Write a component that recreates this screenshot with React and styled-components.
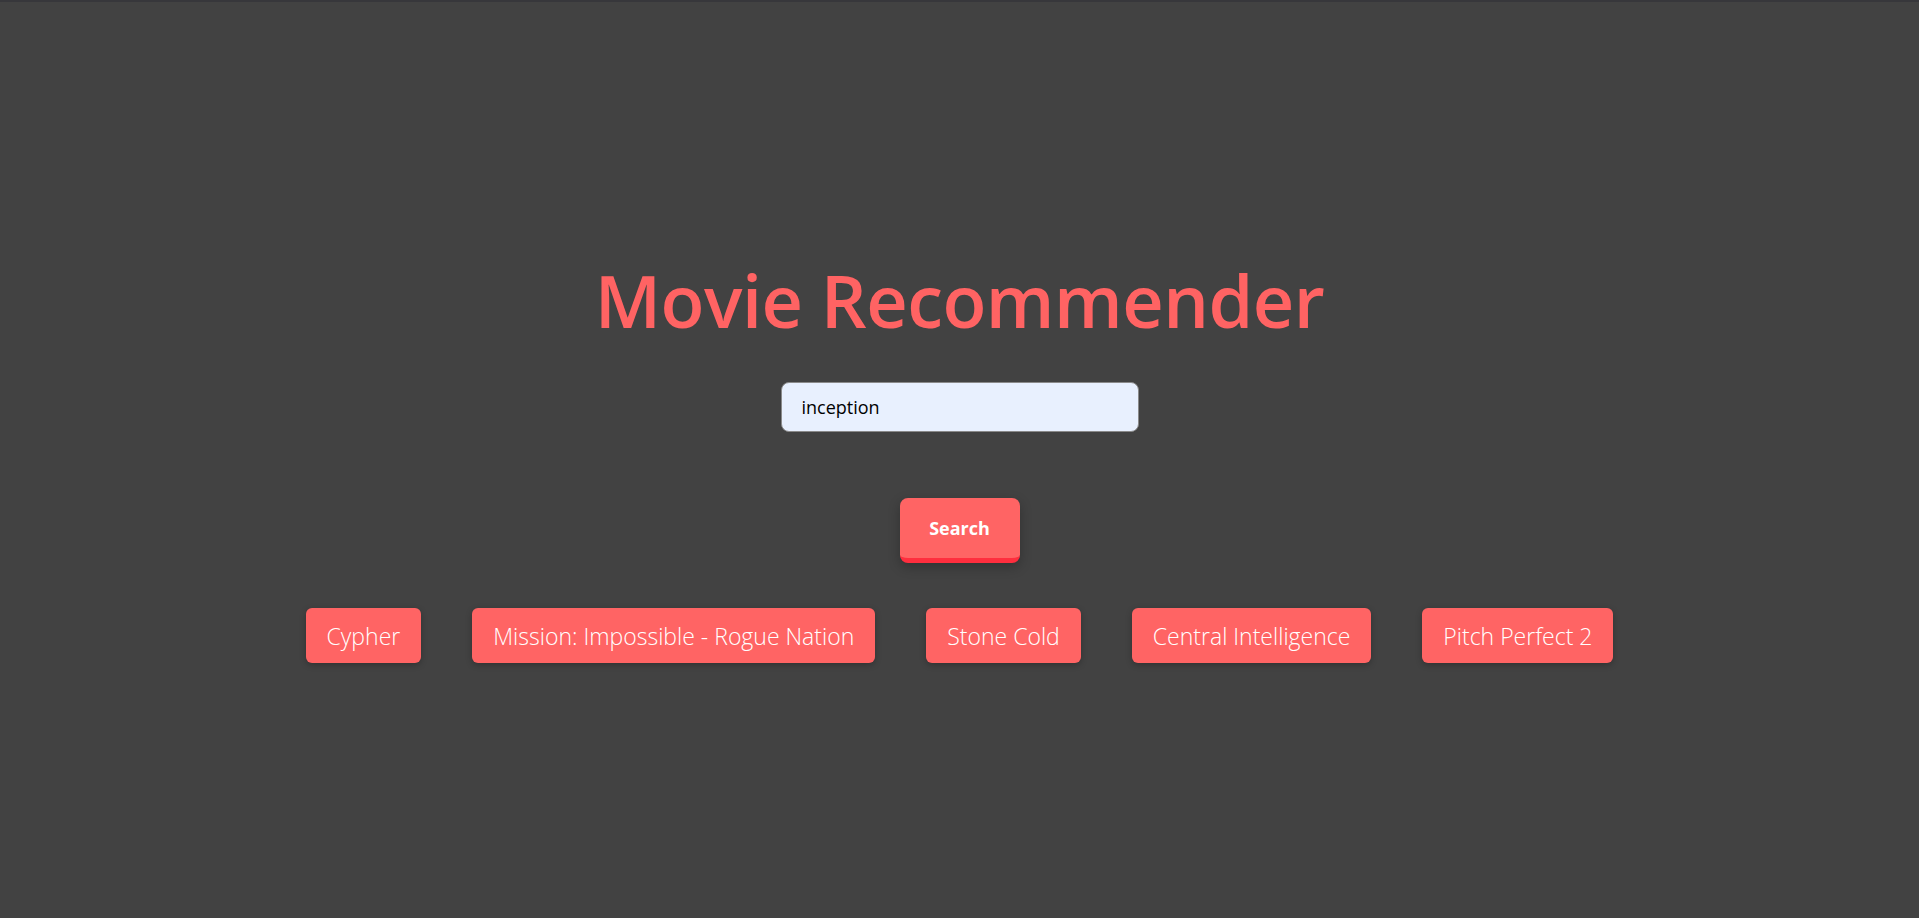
import { createGlobalStyle } from "styled-components";
import styled from "styled-components";

const GlobalStyle = createGlobalStyle`
  html, body {
    margin: 0;
    padding: 0;
    background-color: #424242;
    font-family: "Open Sans", "Noto Sans", sans-serif;
  }
  * {
    box-sizing: border-box;
  }
`;

const Page = styled.div`
  min-height: 100vh;
  border-top: 2px solid #37373b;
  display: flex;
  flex-direction: column;
  align-items: center;
  padding-top: 248px;
`;

const Title = styled.h1`
  margin: 0;
  font-size: 72px;
  font-weight: 600;
  line-height: 100px;
  color: #ff6363;
  letter-spacing: -0.5px;
`;

const SearchInput = styled.input`
  margin-top: 32px;
  width: 358px;
  height: 50px;
  padding: 0 20px;
  border: 1px solid #8a8a8a;
  border-radius: 8px;
  background-color: #e8f0fe;
  font-family: inherit;
  font-size: 18px;
  color: #000;
  outline: none;
`;

const SearchButton = styled.button`
  margin-top: 66px;
  width: 120px;
  height: 65px;
  border: none;
  border-bottom: 5px solid #ff2e3e;
  border-radius: 8px;
  background-color: #ff6464;
  color: #fff;
  font-family: inherit;
  font-size: 18px;
  font-weight: 700;
  cursor: pointer;
  box-shadow: 0 4px 12px rgba(0, 0, 0, 0.25);
`;

const Results = styled.div`
  margin-top: 45px;
  display: flex;
  justify-content: center;
  gap: 51px;
`;

const Chip = styled.div`
  height: 55px;
  padding: 0 21px;
  display: flex;
  align-items: center;
  background-color: #ff6464;
  border-radius: 6px;
  color: #fff;
  font-size: 23px;
  font-weight: 300;
  box-shadow: 0 2px 6px rgba(0, 0, 0, 0.25);
`;

const movies = [
  "Cypher",
  "Mission: Impossible - Rogue Nation",
  "Stone Cold",
  "Central Intelligence",
  "Pitch Perfect 2",
];

const App = () => {
  return (
    <>
      <GlobalStyle />
      <Page>
        <Title>Movie Recommender</Title>
        <SearchInput defaultValue="inception" />
        <SearchButton>Search</SearchButton>
        <Results>
          {movies.map((m) => (
            <Chip key={m}>{m}</Chip>
          ))}
        </Results>
      </Page>
    </>
  );
};

export default App;
